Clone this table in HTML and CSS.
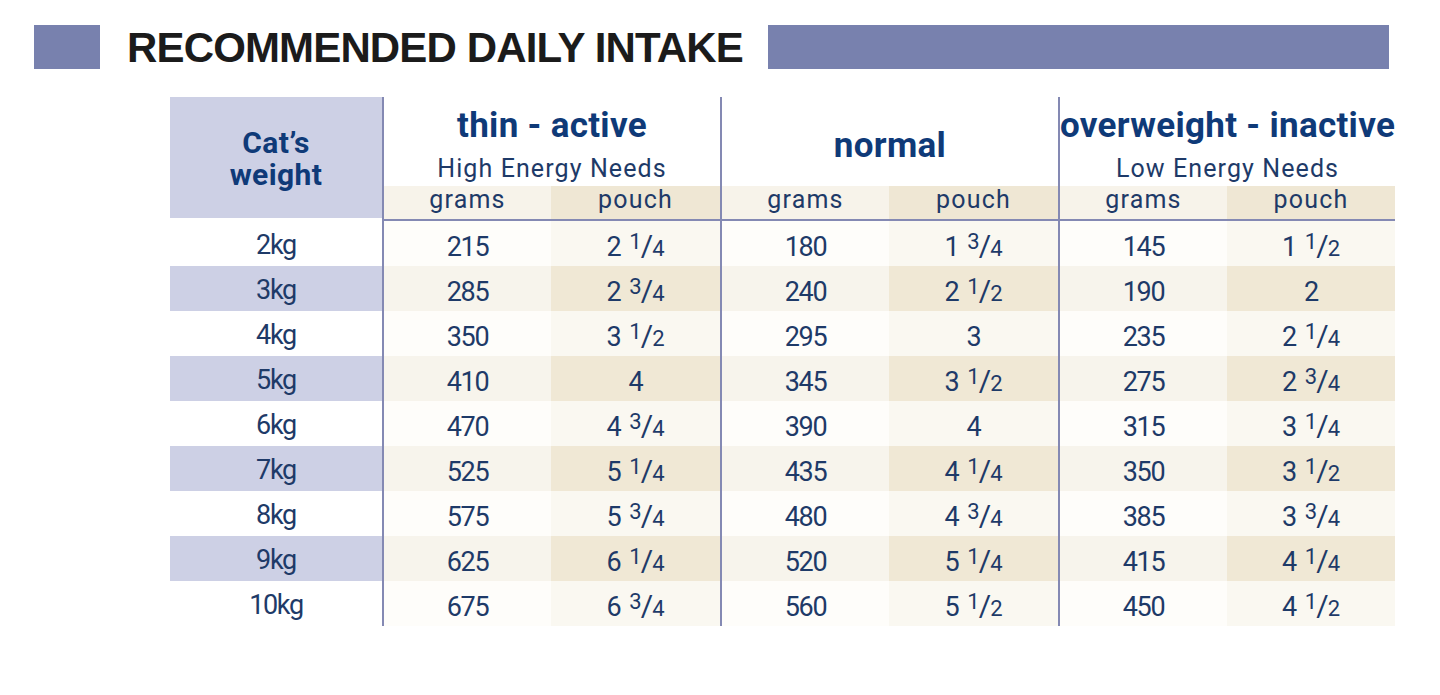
FILE: index.html
```html
<!DOCTYPE html>
<html lang="en">
<head>
<meta charset="utf-8">
<title>Recommended Daily Intake</title>
<link rel="stylesheet" href="styles.css">
</head>
<body>
<div class="page">
  <header class="title-row">
    <span class="sq"></span>
    <h1 class="title">RECOMMENDED DAILY INTAKE</h1>
    <span class="bar"></span>
  </header>

  <div class="tbl">
    <div class="wh">Cat’s<br>weight</div>
    <div class="gh gl"><div class="gt">thin - active</div><div class="gs">High Energy Needs</div></div>
    <div class="gh gl gh-mid"><div class="gt">normal</div></div>
    <div class="gh gl"><div class="gt">overweight - inactive</div><div class="gs">Low Energy Needs</div></div>

    <div class="sh sg gl">grams</div><div class="sh sp">pouch</div>
    <div class="sh sg gl">grams</div><div class="sh sp">pouch</div>
    <div class="sh sg gl">grams</div><div class="sh sp">pouch</div>

    <div class="row odd">
      <div class="w">2kg</div>
      <div class="g gl">215</div><div class="p">2<span class="fr"><span class="n">1</span><span class="s">/</span><span class="d">4</span></span></div>
      <div class="g gl">180</div><div class="p">1<span class="fr"><span class="n">3</span><span class="s">/</span><span class="d">4</span></span></div>
      <div class="g gl">145</div><div class="p">1<span class="fr"><span class="n">1</span><span class="s">/</span><span class="d">2</span></span></div>
    </div>
    <div class="row even">
      <div class="w">3kg</div>
      <div class="g gl">285</div><div class="p">2<span class="fr"><span class="n">3</span><span class="s">/</span><span class="d">4</span></span></div>
      <div class="g gl">240</div><div class="p">2<span class="fr"><span class="n">1</span><span class="s">/</span><span class="d">2</span></span></div>
      <div class="g gl">190</div><div class="p">2</div>
    </div>
    <div class="row odd">
      <div class="w">4kg</div>
      <div class="g gl">350</div><div class="p">3<span class="fr"><span class="n">1</span><span class="s">/</span><span class="d">2</span></span></div>
      <div class="g gl">295</div><div class="p">3</div>
      <div class="g gl">235</div><div class="p">2<span class="fr"><span class="n">1</span><span class="s">/</span><span class="d">4</span></span></div>
    </div>
    <div class="row even">
      <div class="w">5kg</div>
      <div class="g gl">410</div><div class="p">4</div>
      <div class="g gl">345</div><div class="p">3<span class="fr"><span class="n">1</span><span class="s">/</span><span class="d">2</span></span></div>
      <div class="g gl">275</div><div class="p">2<span class="fr"><span class="n">3</span><span class="s">/</span><span class="d">4</span></span></div>
    </div>
    <div class="row odd">
      <div class="w">6kg</div>
      <div class="g gl">470</div><div class="p">4<span class="fr"><span class="n">3</span><span class="s">/</span><span class="d">4</span></span></div>
      <div class="g gl">390</div><div class="p">4</div>
      <div class="g gl">315</div><div class="p">3<span class="fr"><span class="n">1</span><span class="s">/</span><span class="d">4</span></span></div>
    </div>
    <div class="row even">
      <div class="w">7kg</div>
      <div class="g gl">525</div><div class="p">5<span class="fr"><span class="n">1</span><span class="s">/</span><span class="d">4</span></span></div>
      <div class="g gl">435</div><div class="p">4<span class="fr"><span class="n">1</span><span class="s">/</span><span class="d">4</span></span></div>
      <div class="g gl">350</div><div class="p">3<span class="fr"><span class="n">1</span><span class="s">/</span><span class="d">2</span></span></div>
    </div>
    <div class="row odd">
      <div class="w">8kg</div>
      <div class="g gl">575</div><div class="p">5<span class="fr"><span class="n">3</span><span class="s">/</span><span class="d">4</span></span></div>
      <div class="g gl">480</div><div class="p">4<span class="fr"><span class="n">3</span><span class="s">/</span><span class="d">4</span></span></div>
      <div class="g gl">385</div><div class="p">3<span class="fr"><span class="n">3</span><span class="s">/</span><span class="d">4</span></span></div>
    </div>
    <div class="row even">
      <div class="w">9kg</div>
      <div class="g gl">625</div><div class="p">6<span class="fr"><span class="n">1</span><span class="s">/</span><span class="d">4</span></span></div>
      <div class="g gl">520</div><div class="p">5<span class="fr"><span class="n">1</span><span class="s">/</span><span class="d">4</span></span></div>
      <div class="g gl">415</div><div class="p">4<span class="fr"><span class="n">1</span><span class="s">/</span><span class="d">4</span></span></div>
    </div>
    <div class="row odd">
      <div class="w">10kg</div>
      <div class="g gl">675</div><div class="p">6<span class="fr"><span class="n">3</span><span class="s">/</span><span class="d">4</span></span></div>
      <div class="g gl">560</div><div class="p">5<span class="fr"><span class="n">1</span><span class="s">/</span><span class="d">2</span></span></div>
      <div class="g gl">450</div><div class="p">4<span class="fr"><span class="n">1</span><span class="s">/</span><span class="d">2</span></span></div>
    </div>
  </div>
</div>
</body>
</html>
```

FILE: styles.css
```css
* { box-sizing: border-box; }

html, body {
  margin: 0;
  padding: 0;
  background: #ffffff;
}

body {
  font-family: Roboto, "Open Sans", sans-serif;
  color: #1e3a68;
}

.page {
  width: 1440px;
  height: 695px;
  padding-top: 25px;
  overflow: hidden;
}

/* ---------- title row ---------- */
.title-row {
  display: flex;
  align-items: flex-start;
  width: 1389px;
  height: 44px;
  padding-left: 34px;
}

.sq {
  flex: 0 0 66px;
  height: 44px;
  background: #7881ae;
}

.title {
  margin: 0 0 0 27px;
  font-family: "Liberation Sans", Arial, sans-serif;
  font-weight: 700;
  font-size: 42px;
  line-height: 46px;
  letter-spacing: -0.85px;
  color: #1b1b1b;
  white-space: nowrap;
}

.bar {
  flex: 0 0 621px;
  height: 44px;
  margin-left: auto;
  background: #7881ae;
}

/* ---------- table ---------- */
.tbl {
  display: grid;
  grid-template-columns: 212px 169px 169px 169px 169px 169px 168px;
  grid-template-rows: 89px 35px repeat(9, 45px);
  margin: 28px 0 0 170px;
  width: 1225px;
}

.row { display: contents; }

.gl { border-left: 2px solid #8489b3; }

.wh {
  grid-column: 1;
  grid-row: 1 / 3;
  margin-bottom: 3px;
  background: #cdd0e5;
  color: #0f3a78;
  font-weight: 700;
  font-size: 30px;
  line-height: 32px;
  letter-spacing: 0.4px;
  text-align: center;
  display: flex;
  align-items: center;
  justify-content: center;
  padding-top: 3px;
}

.gh {
  grid-column: span 2;
  text-align: center;
  padding-top: 9px;
  white-space: nowrap;
}

.gh-mid { padding-top: 29px; }

.gt {
  color: #0f3a78;
  font-weight: 700;
  font-size: 35px;
  line-height: 40px;
  letter-spacing: 0.3px;
}

.gs {
  margin-top: 8px;
  font-size: 25px;
  line-height: 30px;
  letter-spacing: 1.1px;
  color: #1e3a68;
}

.sh {
  text-align: center;
  font-size: 25px;
  line-height: 28px;
  letter-spacing: 1.2px;
  border-bottom: 2px solid #8489b3;
}

.sg { background: #f7f3ea; }
.sp { background: #efe7d4; }

.w, .g, .p {
  text-align: center;
  font-size: 27px;
  line-height: 37px;
  padding-top: 8px;
  letter-spacing: -1.3px;
  white-space: nowrap;
}

.w { padding-top: 6px; }

.odd .w { background: #ffffff; }
.odd .g { background: #fefdfa; }
.odd .p { background: #faf8f1; }

.even .w { background: #cdd0e5; }
.even .g { background: #f7f4ec; }
.even .p { background: #f0e8d5; }

.fr {
  margin-left: 9px;
  letter-spacing: 0;
}

.n, .d {
  font-size: 22px;
  line-height: 1;
}

.n { vertical-align: 7px; }

.s {
  font-size: 30px;
  line-height: 1;
  margin: 0 -1px;
}
```
